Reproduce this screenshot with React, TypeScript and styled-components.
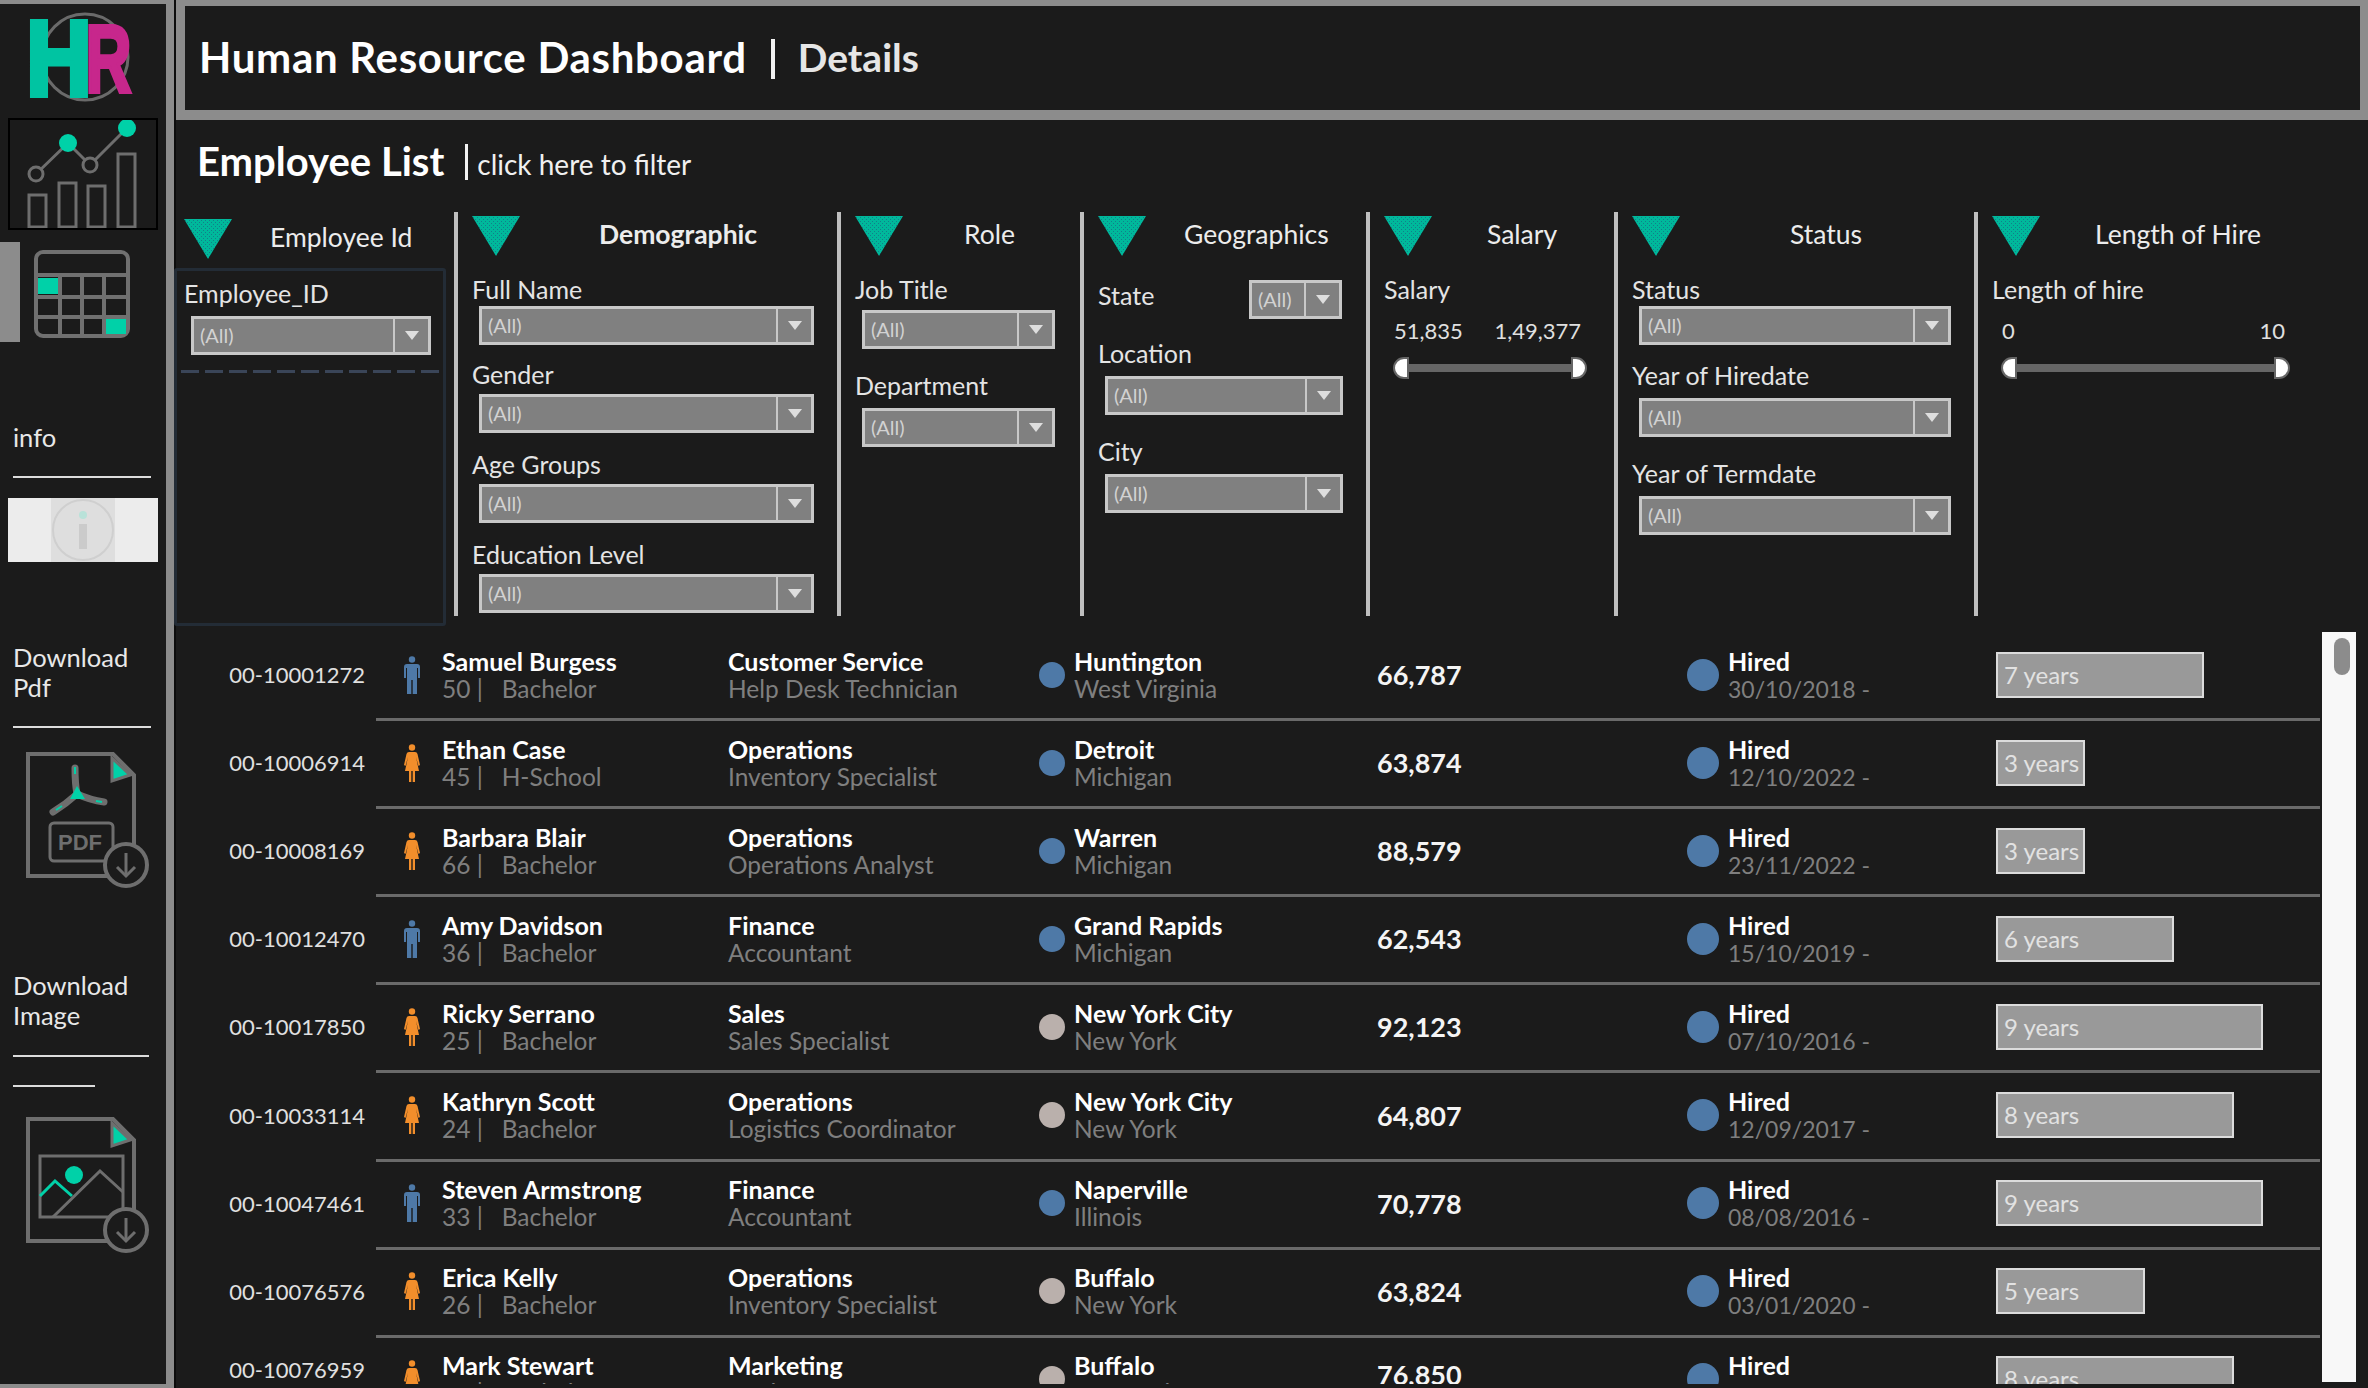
import React from "react";
import styled, { createGlobalStyle } from "styled-components";

const GlobalStyle = createGlobalStyle`
  html, body { margin: 0; padding: 0; background: #1b1b1b; }
  body { font-family: "Lato", "Open Sans", sans-serif; color: #e6e6e6; }
  * { box-sizing: border-box; }
`;

type Employee = {
  id: string;
  gender: "m" | "f";
  name: string;
  age: number;
  edu: string;
  dept: string;
  title: string;
  city: string;
  state: string;
  salary: string;
  date: string;
  years: number;
  dot: "blue" | "grey";
};

const employees: Employee[] = [
  { id: "00-10001272", gender: "m", name: "Samuel Burgess", age: 50, edu: "Bachelor", dept: "Customer Service", title: "Help Desk Technician", city: "Huntington", state: "West Virginia", salary: "66,787", date: "30/10/2018", years: 7, dot: "blue" },
  { id: "00-10006914", gender: "f", name: "Ethan Case", age: 45, edu: "H-School", dept: "Operations", title: "Inventory Specialist", city: "Detroit", state: "Michigan", salary: "63,874", date: "12/10/2022", years: 3, dot: "blue" },
  { id: "00-10008169", gender: "f", name: "Barbara Blair", age: 66, edu: "Bachelor", dept: "Operations", title: "Operations Analyst", city: "Warren", state: "Michigan", salary: "88,579", date: "23/11/2022", years: 3, dot: "blue" },
  { id: "00-10012470", gender: "m", name: "Amy Davidson", age: 36, edu: "Bachelor", dept: "Finance", title: "Accountant", city: "Grand Rapids", state: "Michigan", salary: "62,543", date: "15/10/2019", years: 6, dot: "blue" },
  { id: "00-10017850", gender: "f", name: "Ricky Serrano", age: 25, edu: "Bachelor", dept: "Sales", title: "Sales Specialist", city: "New York City", state: "New York", salary: "92,123", date: "07/10/2016", years: 9, dot: "grey" },
  { id: "00-10033114", gender: "f", name: "Kathryn Scott", age: 24, edu: "Bachelor", dept: "Operations", title: "Logistics Coordinator", city: "New York City", state: "New York", salary: "64,807", date: "12/09/2017", years: 8, dot: "grey" },
  { id: "00-10047461", gender: "m", name: "Steven Armstrong", age: 33, edu: "Bachelor", dept: "Finance", title: "Accountant", city: "Naperville", state: "Illinois", salary: "70,778", date: "08/08/2016", years: 9, dot: "blue" },
  { id: "00-10076576", gender: "f", name: "Erica Kelly", age: 26, edu: "Bachelor", dept: "Operations", title: "Inventory Specialist", city: "Buffalo", state: "New York", salary: "63,824", date: "03/01/2020", years: 5, dot: "grey" },
  { id: "00-10076959", gender: "f", name: "Mark Stewart", age: 41, edu: "Bachelor", dept: "Marketing", title: "Analyst", city: "Buffalo", state: "New York", salary: "76,850", date: "11/02/2017", years: 8, dot: "grey" },
];

const Page = styled.div`
  display: flex;
  width: 2368px;
  height: 1388px;
  overflow: hidden;
  background: #1b1b1b;
`;

const Sidebar = styled.aside`
  flex: none;
  width: 174px;
  height: 100%;
  border-top: 4px solid #8c8c8c;
  border-right: 8px solid #8c8c8c;
  border-bottom: 4px solid #8c8c8c;
  display: flex;
  flex-direction: column;
`;

const Gutter = styled.div`
  flex: none;
  width: 2px;
  background: #0c0c0c;
`;

const LogoSvg = styled.svg`
  display: block;
  flex: none;
  margin-top: -11px;
`;

const ActiveBox = styled.div`
  flex: none;
  margin: 5px 0 0 8px;
  width: 150px;
  height: 112px;
  border: 2px solid #000;
  svg {
    display: block;
  }
`;

const CalendarRow = styled.div`
  flex: none;
  display: flex;
  margin-top: 12px;
  height: 100px;
`;

const Marker = styled.div`
  width: 20px;
  height: 100%;
  background: #8c8c8c;
`;

const SideLabel = styled.div`
  flex: none;
  margin: 80px 0 0 13px;
  font-size: 25.5px;
  line-height: 30px;
  color: #e8e8e8;
`;

const SideRule = styled.div<{ $mt: number; $w: number }>`
  flex: none;
  margin: ${(p) => p.$mt}px 0 0 13px;
  width: ${(p) => p.$w}px;
  height: 2px;
  background: #dcdcdc;
`;

const InfoBox = styled.div`
  flex: none;
  display: flex;
  justify-content: center;
  margin: 20px 0 0 8px;
  width: 150px;
  height: 64px;
  background: #ececec;
`;

const InfoInner = styled.div`
  width: 64px;
  height: 64px;
  background: #dedede;
`;

const DocSvg = styled.svg<{ $mt: number }>`
  display: block;
  flex: none;
  margin: ${(p) => p.$mt}px 0 0 20px;
`;

const Main = styled.main`
  flex: 1;
  min-width: 0;
  display: flex;
  flex-direction: column;
`;

const Header = styled.header`
  flex: none;
  height: 120px;
  display: flex;
  align-items: center;
  padding: 0 0 3px 14px;
  border-style: solid;
  border-color: #8c8c8c;
  border-width: 6px 8px 10px 9px;
`;

const HeaderTitle = styled.h1`
  margin: 0;
  font-size: 42px;
  letter-spacing: 0.7px;
  font-weight: 700;
  color: #fff;
  white-space: nowrap;
`;

const HeaderBar = styled.span`
  width: 4px;
  height: 40px;
  margin: 4px 23px 0 24px;
  background: #f2f2f2;
`;

const HeaderSub = styled.span`
  font-size: 39px;
  font-weight: 700;
  color: #e6e6e6;
`;

const ListTitleRow = styled.div`
  flex: none;
  height: 92px;
  display: flex;
  align-items: center;
  padding: 0 0 10px 21px;
`;

const ListTitle = styled.h2`
  margin: 0;
  font-size: 40px;
  font-weight: 700;
  color: #fff;
`;

const ListBar = styled.span`
  width: 3px;
  height: 36px;
  margin: 2px 9px 0 21px;
  background: #f2f2f2;
`;

const ListHint = styled.span`
  font-size: 28px;
  color: #f0f0f0;
  margin-top: 6px;
`;

const Filters = styled.section`
  flex: none;
  height: 414px;
  display: flex;
  align-items: flex-start;
`;

const Panel = styled.div<{ $w: number; $first?: boolean }>`
  flex: none;
  width: ${(p) => p.$w}px;
  height: 404px;
  padding: 4px 0 0 ${(p) => (p.$first ? 8 : 14)}px;
  ${(p) => (p.$first ? "" : "border-left: 4px solid #bfbfbf;")}
`;

const PanelHead = styled.div<{ $titleLeft: number; $bold?: boolean; $nudge?: number }>`
  height: 44px;
  display: flex;
  align-items: flex-start;
  margin-top: ${(p) => p.$nudge ?? 0}px;
  span {
    margin-left: ${(p) => p.$titleLeft}px;
    font-size: 26.5px;
    line-height: 36px;
    font-weight: ${(p) => (p.$bold ? 700 : 400)};
    color: #ececec;
    white-space: nowrap;
  }
`;

const IdBox = styled.div`
  margin: 5px 0 0 -10px;
  width: 272px;
  height: 358px;
  border: 3px solid #232c36;
  border-radius: 3px;
  padding: 7px 0 0 7px;
`;

const DashedRule = styled.div`
  margin: 15px 0 0 -3px;
  width: 260px;
  height: 3px;
  background: repeating-linear-gradient(90deg, #3a4558 0 18px, transparent 18px 24px);
`;

const Field = styled.div<{ $mt: number }>`
  margin-top: ${(p) => p.$mt}px;
`;

const InlineField = styled.div<{ $mt: number; $w: number }>`
  margin-top: ${(p) => p.$mt}px;
  width: ${(p) => p.$w}px;
  display: flex;
  align-items: center;
  justify-content: space-between;
  & > div:first-child {
    margin-bottom: 9px;
  }
`;

const FieldLabel = styled.div`
  font-size: 25px;
  line-height: 30px;
  color: #e4e4e4;
  white-space: nowrap;
`;

const SelectBox = styled.div<{ $w: number; $gap: number; $inline?: boolean }>`
  display: flex;
  width: ${(p) => p.$w}px;
  height: 39px;
  margin: ${(p) => (p.$inline ? "0" : `${p.$gap}px 0 0 7px`)};
  border: 3px solid #c8c8c8;
  background: #808080;
  color: #d2d2d2;
  font-size: 20px;
`;

const SelectText = styled.div`
  flex: 1;
  line-height: 33px;
  padding-left: 6px;
`;

const SelectArrow = styled.div`
  flex: none;
  width: 35px;
  border-left: 2px solid #c8c8c8;
  display: flex;
  align-items: center;
  justify-content: center;
  &::after {
    content: "";
    border-left: 7px solid transparent;
    border-right: 7px solid transparent;
    border-top: 9px solid #dedede;
  }
`;

const SliderValues = styled.div<{ $w: number }>`
  width: ${(p) => p.$w}px;
  margin: 13px 0 0 10px;
  display: flex;
  justify-content: space-between;
  font-size: 22px;
  line-height: 28px;
  color: #e0e0e0;
`;

const SliderRail = styled.div<{ $w: number }>`
  width: ${(p) => p.$w}px;
  margin: 12px 0 0 9px;
  height: 22px;
  display: flex;
  align-items: center;
`;

const SliderTrack = styled.div`
  flex: 1;
  height: 8px;
  background: #666;
`;

const Thumb = styled.div<{ $right?: boolean }>`
  width: 16px;
  height: 22px;
  background: #fff;
  border: 2px solid #666;
  border-radius: ${(p) => (p.$right ? "0 11px 11px 0" : "11px 0 0 11px")};
`;

const RowsArea = styled.section`
  flex: none;
  height: 752px;
  margin-top: 6px;
  display: flex;
  align-items: flex-start;
  overflow: hidden;
`;

const RowsList = styled.div`
  flex: none;
  width: 2146px;
  height: 100%;
  padding-top: 1px;
  overflow: hidden;
`;

const Scrollbar = styled.div`
  flex: none;
  width: 34px;
  height: 750px;
  background: #f8f8f8;
  padding: 6px 0 0 12px;
`;

const ScrollThumb = styled.div`
  width: 16px;
  height: 37px;
  background: #8c8c8c;
  border-radius: 8px;
`;

const Row = styled.div`
  display: flex;
  height: 88.1px;
`;

const IdCell = styled.div<{ $clipped?: boolean }>`
  flex: none;
  width: 200px;
  padding-right: 11px;
  padding-bottom: ${(p) => (p.$clipped ? 24 : 5)}px;
  display: flex;
  align-items: center;
  justify-content: flex-end;
  font-size: 22px;
  color: #e0e0e0;
`;

const RowBody = styled.div`
  flex: none;
  width: 1944px;
  display: grid;
  grid-template-columns: 66px 286px 311px 338px 310px 309px 324px;
  align-items: center;
  border-bottom: 3px solid #6a6a6a;
  padding-bottom: 2px;
`;

const GenderCell = styled.div`
  padding-left: 28px;
  display: flex;
`;

const Stack = styled.div`
  display: flex;
  flex-direction: column;
`;

const Strong = styled.div`
  font-size: 25px;
  line-height: 28px;
  font-weight: 700;
  color: #fff;
  white-space: nowrap;
`;

const Muted = styled.div<{ $size?: number }>`
  font-size: ${(p) => p.$size ?? 24.5}px;
  line-height: 28px;
  color: #7f7f7f;
  white-space: pre;
`;

const DotCell = styled.div<{ $gap: number }>`
  display: flex;
  align-items: center;
  gap: ${(p) => p.$gap}px;
`;

const Dot = styled.div<{ $size: number; $tone: "blue" | "grey" }>`
  flex: none;
  width: ${(p) => p.$size}px;
  height: ${(p) => p.$size}px;
  border-radius: 50%;
  background: ${(p) => (p.$tone === "blue" ? "#4e79a7" : "#bab0ac")};
`;

const SalaryCell = styled.div<{ $clipped?: boolean }>`
  font-size: 27px;
  font-weight: 700;
  color: #f4f4f4;
  padding-bottom: ${(p) => (p.$clipped ? 10 : 0)}px;
`;

const YearsBar = styled.div`
  height: 46px;
  background: #999;
  border: 2px solid #dcdcdc;
  padding-left: 6px;
  font-size: 24px;
  line-height: 42px;
  color: #e2e2e2;
  white-space: nowrap;
`;

const Triangle = () => (
  <svg width="48" height="40" viewBox="0 0 48 40" style={{ flex: "none" }}>
    <defs>
      <pattern id="tri-dots" width="4" height="4" patternUnits="userSpaceOnUse">
        <rect width="4" height="4" fill="#00b89b" />
        <rect x="1" y="1" width="1" height="1" fill="#127f8a" />
        <rect x="3" y="3" width="1" height="1" fill="#127f8a" />
      </pattern>
    </defs>
    <polygon points="0,0 48,0 24,40" fill="url(#tri-dots)" />
  </svg>
);

const Select = ({ w, gap = 2, inline }: { w: number; gap?: number; inline?: boolean }) => (
  <SelectBox $w={w} $gap={gap} $inline={inline}>
    <SelectText>(All)</SelectText>
    <SelectArrow />
  </SelectBox>
);

const Slider = ({ w }: { w: number }) => (
  <SliderRail $w={w}>
    <Thumb />
    <SliderTrack />
    <Thumb $right />
  </SliderRail>
);

const Logo = () => (
  <LogoSvg width="166" height="120" viewBox="0 -20 166 120">
    <circle cx="85" cy="44" r="43" fill="none" stroke="#6a6a6a" strokeWidth="3" />
    <text fontFamily="Liberation Sans" fontWeight="700">
      <tspan x="26.5" y="82" fontSize="106" fill="#00c4a2" stroke="#00c4a2" strokeWidth="6" textLength="65" lengthAdjust="spacingAndGlyphs">H</tspan>
      <tspan x="85.5" y="79" fontSize="96" fill="#c7278c" stroke="#c7278c" strokeWidth="4" textLength="46" lengthAdjust="spacingAndGlyphs">R</tspan>
    </text>
  </LogoSvg>
);

const ChartIcon = () => (
  <svg width="146" height="108" viewBox="10 120 146 108">
    <g fill="none" stroke="#6e6e6e" strokeWidth="3">
      <rect x="29" y="195" width="17" height="32" />
      <rect x="59" y="183" width="17" height="44" />
      <rect x="88" y="186" width="17" height="41" />
      <rect x="118" y="154" width="17" height="73" />
      <polyline points="36,174 68,143 90,165 127,128" />
      <circle cx="36" cy="174" r="7" fill="#1b1b1b" />
      <circle cx="90" cy="165" r="7" fill="#1b1b1b" />
    </g>
    <circle cx="68" cy="143" r="9" fill="#00d1a8" />
    <circle cx="127" cy="128" r="9" fill="#00d1a8" />
  </svg>
);

const CalendarIcon = () => (
  <svg width="120" height="100" viewBox="20 242 120 100">
    <rect x="36" y="252" width="92" height="84" rx="7" fill="none" stroke="#707070" strokeWidth="4" />
    <rect x="38" y="278" width="20" height="16" fill="#00d1a8" />
    <rect x="106" y="318" width="20" height="16" fill="#00d1a8" />
    <g stroke="#707070" strokeWidth="4">
      <line x1="36" y1="275" x2="128" y2="275" />
      <line x1="36" y1="297" x2="128" y2="297" />
      <line x1="36" y1="317" x2="128" y2="317" />
      <line x1="60" y1="275" x2="60" y2="336" />
      <line x1="82" y1="275" x2="82" y2="336" />
      <line x1="104" y1="275" x2="104" y2="336" />
    </g>
  </svg>
);

const InfoIcon = () => (
  <svg width="64" height="64" viewBox="0 0 64 64">
    <circle cx="32" cy="32" r="30" fill="none" stroke="#cfcfcf" strokeWidth="2" />
    <circle cx="32" cy="17" r="4" fill="#b9e2d9" />
    <rect x="28" y="26" width="8" height="25" fill="#cbcbcb" />
  </svg>
);

const DocIcon = ({ mt, children }: { mt: number; children: React.ReactNode }) => (
  <DocSvg $mt={mt} width="135" height="140" viewBox="0 0 135 140">
    <g fill="none" stroke="#6e6e6e" strokeWidth="4">
      <polyline points="108,126 8,126 8,4 93,4 114,25 114,96" />
      <polygon points="92,8 110,25 92,31" fill="#00d1a8" strokeWidth="3" />
    </g>
    {children}
    <circle cx="106" cy="115" r="21" fill="#1b1b1b" stroke="#6e6e6e" strokeWidth="4" />
    <g fill="none" stroke="#6e6e6e" strokeWidth="3">
      <line x1="106" y1="103" x2="106" y2="126" />
      <polyline points="97,117 106,126 115,117" />
    </g>
  </DocSvg>
);

const PdfGlyph = () => (
  <>
    <g fill="none" stroke="#6e6e6e" strokeWidth="7" strokeLinecap="round">
      <path d="M55 18 Q55 34 57 44 M57 44 Q46 54 33 62 M57 44 Q70 50 84 52" />
    </g>
    <g fill="none" stroke="#00d1a8" strokeWidth="2">
      <path d="M55 17 V24 M36 60 L42 56 M76 51 L82 52" />
    </g>
    <polygon points="57,36 65,49 50,49" fill="#00d1a8" />
    <rect x="30" y="73" width="63" height="38" rx="4" fill="none" stroke="#6e6e6e" strokeWidth="3" />
    <text x="38" y="100" fontFamily="Liberation Sans" fontWeight="700" fontSize="22" fill="#6e6e6e">PDF</text>
  </>
);

const PictureGlyph = () => (
  <>
    <rect x="20" y="41" width="83" height="61" fill="none" stroke="#6e6e6e" strokeWidth="3" />
    <ellipse cx="54" cy="60" rx="9" ry="9" fill="#00d1a8" />
    <polyline points="20,81 35,66 52,81" fill="none" stroke="#00d1a8" strokeWidth="3" />
    <polyline points="33,102 80,56 103,77" fill="none" stroke="#6e6e6e" strokeWidth="3" />
  </>
);

const PersonIcon = ({ gender }: { gender: "m" | "f" }) => {
  const color = gender === "m" ? "#4e79a7" : "#f28e2b";
  return (
    <svg width="16" height="38" viewBox="0 0 16 38">
      <circle cx="8" cy="3.5" r="3.2" fill={color} />
      {gender === "m" ? (
        <path d="M3 8 H13 Q16 8 16 11 V22 H14 V12 H13 V38 H8.7 V24 H7.3 V38 H3 V12 H2 V22 H0 V11 Q0 8 3 8 Z" fill={color} />
      ) : (
        <path d="M5 8 H11 Q13 8 13.5 10 L16 21 L14.5 22 L12 13 L15 27 H11 V38 H8.7 V27 H7.3 V38 H5 V27 H1 L4 13 L1.5 22 L0 21 L2.5 10 Q3 8 5 8 Z" fill={color} />
      )}
    </svg>
  );
};

const App = () => {
  return (
    <Page>
      <GlobalStyle />
      <Sidebar>
        <Logo />
        <ActiveBox>
          <ChartIcon />
        </ActiveBox>
        <CalendarRow>
          <Marker />
          <CalendarIcon />
        </CalendarRow>
        <SideLabel>info</SideLabel>
        <SideRule $mt={24} $w={138} />
        <InfoBox>
          <InfoInner>
            <InfoIcon />
          </InfoInner>
        </InfoBox>
        <SideLabel>
          Download
          <br />
          Pdf
        </SideLabel>
        <SideRule $mt={24} $w={138} />
        <DocIcon mt={22}>
          <PdfGlyph />
        </DocIcon>
        <SideLabel>
          Download
          <br />
          Image
        </SideLabel>
        <SideRule $mt={25} $w={136} />
        <SideRule $mt={28} $w={82} />
        <DocIcon mt={28}>
          <PictureGlyph />
        </DocIcon>
      </Sidebar>
      <Gutter />

      <Main>
        <Header>
          <HeaderTitle>Human Resource Dashboard</HeaderTitle>
          <HeaderBar />
          <HeaderSub>Details</HeaderSub>
        </Header>
        <ListTitleRow>
          <ListTitle>Employee List</ListTitle>
          <ListBar />
          <ListHint>click here to filter</ListHint>
        </ListTitleRow>

        <Filters>
          <Panel $w={278} $first>
            <PanelHead $titleLeft={38} $nudge={3}>
              <Triangle />
              <span>Employee Id</span>
            </PanelHead>
            <IdBox>
              <FieldLabel>Employee_ID</FieldLabel>
              <Select w={240} gap={8} />
              <DashedRule />
            </IdBox>
          </Panel>

          <Panel $w={383}>
            <PanelHead $titleLeft={79} $bold>
              <Triangle />
              <span>Demographic</span>
            </PanelHead>
            <Field $mt={14}>
              <FieldLabel>Full Name</FieldLabel>
              <Select w={335} />
            </Field>
            <Field $mt={14}>
              <FieldLabel>Gender</FieldLabel>
              <Select w={335} gap={5} />
            </Field>
            <Field $mt={16}>
              <FieldLabel>Age Groups</FieldLabel>
              <Select w={335} gap={5} />
            </Field>
            <Field $mt={16}>
              <FieldLabel>Education Level</FieldLabel>
              <Select w={335} gap={5} />
            </Field>
          </Panel>

          <Panel $w={243}>
            <PanelHead $titleLeft={61}>
              <Triangle />
              <span>Role</span>
            </PanelHead>
            <Field $mt={14}>
              <FieldLabel>Job Title</FieldLabel>
              <Select w={193} gap={6} />
            </Field>
            <Field $mt={21}>
              <FieldLabel>Department</FieldLabel>
              <Select w={193} gap={8} />
            </Field>
          </Panel>

          <Panel $w={286}>
            <PanelHead $titleLeft={38}>
              <Triangle />
              <span>Geographics</span>
            </PanelHead>
            <InlineField $mt={20} $w={244}>
              <FieldLabel>State</FieldLabel>
              <Select w={93} inline />
            </InlineField>
            <Field $mt={19}>
              <FieldLabel>Location</FieldLabel>
              <Select w={238} gap={8} />
            </Field>
            <Field $mt={21}>
              <FieldLabel>City</FieldLabel>
              <Select w={238} gap={8} />
            </Field>
          </Panel>

          <Panel $w={248}>
            <PanelHead $titleLeft={55}>
              <Triangle />
              <span>Salary</span>
            </PanelHead>
            <Field $mt={14}>
              <FieldLabel>Salary</FieldLabel>
            </Field>
            <SliderValues $w={187}>
              <span>51,835</span>
              <span>1,49,377</span>
            </SliderValues>
            <Slider w={194} />
          </Panel>

          <Panel $w={360}>
            <PanelHead $titleLeft={110}>
              <Triangle />
              <span>Status</span>
            </PanelHead>
            <Field $mt={14}>
              <FieldLabel>Status</FieldLabel>
              <Select w={312} />
            </Field>
            <Field $mt={15}>
              <FieldLabel>Year of Hiredate</FieldLabel>
              <Select w={312} gap={8} />
            </Field>
            <Field $mt={21}>
              <FieldLabel>Year of Termdate</FieldLabel>
              <Select w={312} gap={8} />
            </Field>
          </Panel>

          <Panel $w={390}>
            <PanelHead $titleLeft={55}>
              <Triangle />
              <span>Length of Hire</span>
            </PanelHead>
            <Field $mt={14}>
              <FieldLabel>Length of hire</FieldLabel>
            </Field>
            <SliderValues $w={283}>
              <span>0</span>
              <span>10</span>
            </SliderValues>
            <Slider w={289} />
          </Panel>
        </Filters>

        <RowsArea>
          <RowsList>
            {employees.map((e, i) => {
              const clipped = i === employees.length - 1;
              return (
                <Row key={e.id}>
                  <IdCell $clipped={clipped}>{e.id}</IdCell>
                  <RowBody>
                    <GenderCell>
                      <PersonIcon gender={e.gender} />
                    </GenderCell>
                    <Stack>
                      <Strong>{e.name}</Strong>
                      <Muted>{`${e.age} |   ${e.edu}`}</Muted>
                    </Stack>
                    <Stack>
                      <Strong>{e.dept}</Strong>
                      <Muted>{e.title}</Muted>
                    </Stack>
                    <DotCell $gap={9}>
                      <Dot $size={26} $tone={e.dot} />
                      <Stack>
                        <Strong>{e.city}</Strong>
                        <Muted>{e.state}</Muted>
                      </Stack>
                    </DotCell>
                    <SalaryCell $clipped={clipped}>{e.salary}</SalaryCell>
                    <DotCell $gap={9}>
                      <Dot $size={32} $tone="blue" />
                      <Stack>
                        <Strong>Hired</Strong>
                        <Muted $size={23}>{`${e.date} -`}</Muted>
                      </Stack>
                    </DotCell>
                    <YearsBar style={{ width: e.years * 29.7 }}>{e.years} years</YearsBar>
                  </RowBody>
                </Row>
              );
            })}
          </RowsList>
          <Scrollbar>
            <ScrollThumb />
          </Scrollbar>
        </RowsArea>
      </Main>
    </Page>
  );
};

export default App;
